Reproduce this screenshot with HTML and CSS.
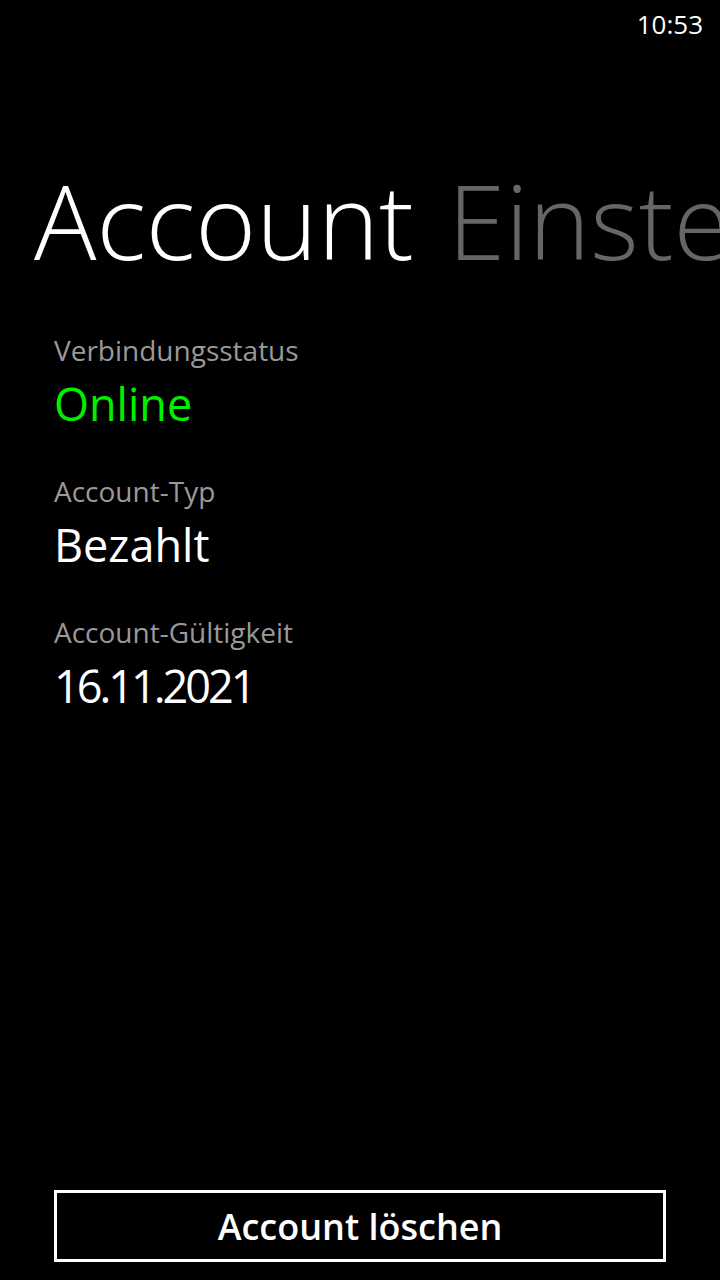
FILE: index.html
```html
<!DOCTYPE html>
<html lang="de">
<head>
  <meta charset="UTF-8" />
  <meta name="viewport" content="width=device-width, initial-scale=1.0" />
  <title>Account Einstellungen</title>
  <link rel="stylesheet" href="styles.css">
</head>
<body>
  <div class="phone">
    <div class="status-bar">
      <span class="clock">10:53</span>
    </div>

    <div class="pivot-header">
      <span class="pivot-item active">Account</span>
      <span class="pivot-item">Einste</span>
    </div>

    <div class="content">
      <div class="field">
        <div class="label">Verbindungsstatus</div>
        <div class="value online">Online</div>
      </div>
      <div class="field">
        <div class="label">Account-Typ</div>
        <div class="value">Bezahlt</div>
      </div>
      <div class="field">
        <div class="label">Account-Gültigkeit</div>
        <div class="value date">16.11.2021</div>
      </div>
    </div>

    <button class="delete-btn">Account löschen</button>
  </div>
</body>
</html>
```

FILE: styles.css
```css
html, body {
  margin: 0;
  padding: 0;
  background: #000;
}
body {
  font-family: "Open Sans", "Noto Sans", sans-serif;
  color: #fff;
}
.phone {
  width: 720px;
  height: 1280px;
  display: flex;
  flex-direction: column;
  overflow: hidden;
}
.status-bar {
  height: 48px;
  display: flex;
  justify-content: flex-end;
  align-items: center;
  padding-right: 17px;
}
.clock {
  font-size: 26px;
  line-height: 1;
}
.pivot-header {
  display: flex;
  gap: 34px;
  white-space: nowrap;
  padding-left: 34px;
  margin-top: 112px;
  height: 120px;
  align-items: flex-start;
}
.pivot-item {
  font-size: 104px;
  font-weight: 300;
  line-height: 120px;
  color: #666;
}
.pivot-item.active {
  color: #fff;
}
.content {
  padding-left: 54px;
  margin-top: 50px;
}
.field {
  margin-bottom: 33px;
}
.label {
  font-size: 28px;
  line-height: 40px;
  color: #999;
}
.value {
  font-size: 45px;
  line-height: 68px;
  color: #fff;
}
.value.online {
  color: #00f000;
}
.value.date {
  letter-spacing: -3px;
}
.delete-btn {
  margin: auto 54px 18px;
  height: 72px;
  background: #000;
  border: 3px solid #fff;
  color: #fff;
  font-family: inherit;
  font-size: 36px;
  font-weight: 600;
  cursor: pointer;
}
```
